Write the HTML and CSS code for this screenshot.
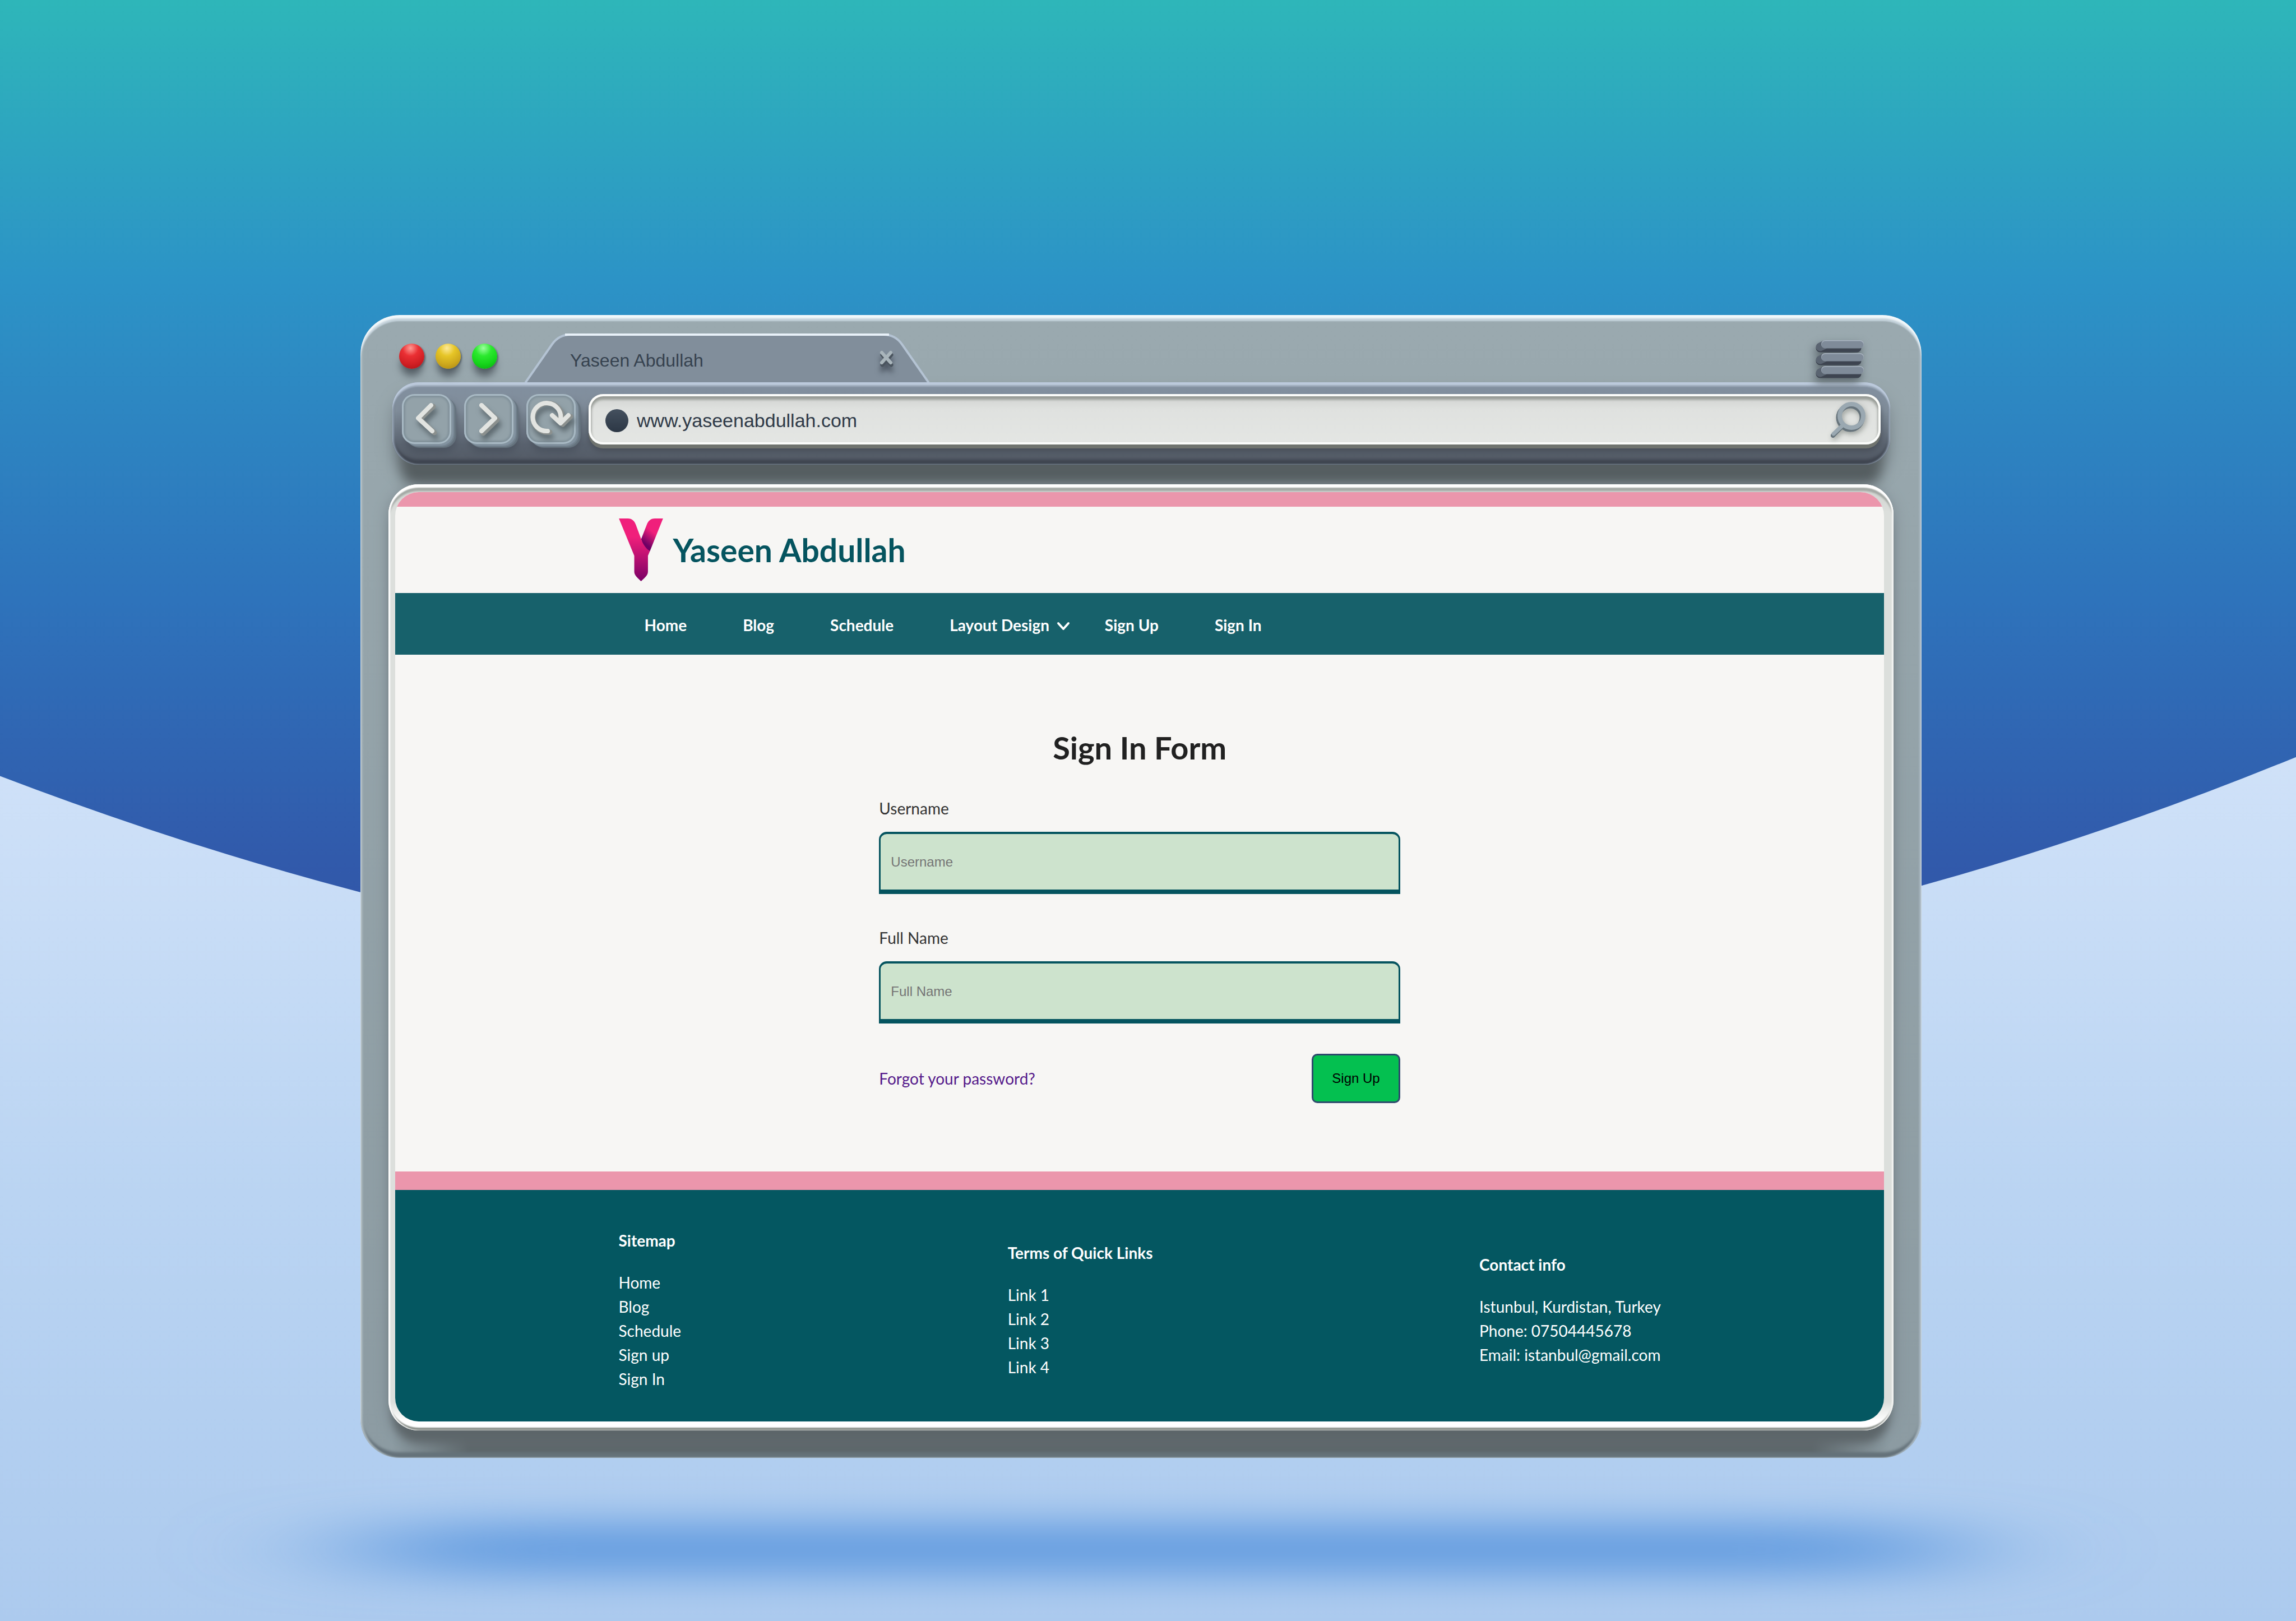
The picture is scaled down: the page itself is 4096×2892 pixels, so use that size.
FILE: index.html
```html
<!DOCTYPE html>
<html lang="en">
<head>
<meta charset="utf-8">
<title>Yaseen Abdullah</title>
<link rel="stylesheet" href="styles.css">
</head>
<body>
<svg class="backdrop" viewBox="0 0 1568 1107" preserveAspectRatio="none" aria-hidden="true">
  <defs>
    <linearGradient id="sea" gradientUnits="userSpaceOnUse" x1="0" y1="0" x2="0" y2="680">
      <stop offset="0" stop-color="#2eb6b9"/>
      <stop offset=".28" stop-color="#2c93c6"/>
      <stop offset=".6" stop-color="#2e73bb"/>
      <stop offset=".86" stop-color="#315aab"/>
      <stop offset="1" stop-color="#3252a4"/>
    </linearGradient>
    <linearGradient id="ice" gradientUnits="userSpaceOnUse" x1="0" y1="520" x2="0" y2="1107">
      <stop offset="0" stop-color="#cfe1f8"/>
      <stop offset=".5" stop-color="#bad4f2"/>
      <stop offset="1" stop-color="#accaee"/>
    </linearGradient>
    <filter id="soft" x="-20%" y="-200%" width="140%" height="500%">
      <feGaussianBlur stdDeviation="60 13"/>
    </filter>
  </defs>
  <rect width="1568" height="1107" fill="url(#ice)"/>
  <path d="M0 0H1568V517Q796 834 0 530Z" fill="url(#sea)"/>
  <rect x="248" y="1040" width="1084" height="36" rx="18" fill="#659de0" filter="url(#soft)"/>
</svg>

<div class="browser">
  <div class="tabs">
    <div class="lights"><span class="light red"></span><span class="light yellow"></span><span class="light green"></span></div>
    <div class="tab">
      <svg class="tab-shape" viewBox="0 0 722 88" preserveAspectRatio="none" aria-hidden="true">
        <path d="M0 88L48 18Q60 2 82 2H640Q662 2 674 18L722 88Z" fill="#818e9b"/>
        <path d="M1 89L49 20Q61 3 82 3H640Q661 3 673 20L721 89" fill="none" stroke="#b4c3d3" stroke-width="4"/>
        <path d="M72 3H650" stroke="#e8f1f9" stroke-width="4"/>
      </svg>
      <span class="tab-title">Yaseen Abdullah</span>
      <button class="tab-close" type="button" aria-label="Close tab">
        <svg viewBox="0 0 28 30"><path d="M6 8L22 26M22 8L6 26" stroke="#4a545e" stroke-width="7" stroke-linecap="round"/><path d="M5 4L21 22M21 4L5 22" stroke="#a9b5bb" stroke-width="6" stroke-linecap="round"/></svg>
      </button>
    </div>
    <button class="menu" type="button" aria-label="Menu">
      <svg viewBox="0 0 90 74">
        <g stroke-linecap="round" stroke-width="15"><path d="M9 15H75M9 38H75M9 61H75" stroke="#3d4450"/><path d="M9 13L17 9M9 36L17 32M9 59L17 55" stroke="#5a6471"/></g>
        <path d="M18 8H80M18 31H80M18 54H80" stroke="#aab5c2" stroke-width="14" stroke-linecap="round"/>
        <path d="M18 9H80M18 32H80M18 55H80" stroke="#7f8b99" stroke-width="13" stroke-linecap="round"/>
      </svg>
    </button>
  </div>

  <div class="toolbar">
    <button class="key" type="button" aria-label="Back"><svg viewBox="0 0 87 89"><path d="M56 22L32 45L58 69" class="glyph-side"/><path d="M52 20L29 43L54 66" class="glyph"/></svg></button>
    <button class="key" type="button" aria-label="Forward"><svg viewBox="0 0 87 89"><path d="M34 23L59 46L34 70" class="glyph-side"/><path d="M31 20L55 43L31 66" class="glyph"/></svg></button>
    <button class="key" type="button" aria-label="Reload"><svg viewBox="0 0 87 89"><path d="M42 68A26 26 0 1 1 64 44M50 41L65 54L79 40" class="glyph-side"/><path d="M38 66A25 25 0 1 1 61 45M46 38L61 52L75 38" class="glyph"/></svg></button>
    <form class="address">
      <span class="site-dot"></span>
      <input class="url" type="text" value="www.yaseenabdullah.com" aria-label="Address">
      <button class="search" type="button" aria-label="Search">
        <svg viewBox="0 0 66 70"><g fill="none" stroke-linecap="round"><g stroke="#66737b"><circle cx="38" cy="30" r="21" stroke-width="9"/><path d="M21 48L7 62" stroke-width="8"/></g><g stroke="#9aa8b1"><circle cx="40" cy="27" r="21" stroke-width="8"/><path d="M23 45L8 59" stroke-width="7"/></g></g></svg>
      </button>
    </form>
  </div>

  <div class="screen">
    <div class="page">
      <header class="site-header">
        <div class="wrap brand">
          <svg class="logo" viewBox="48 47 345 491" role="img" aria-label="Y logo">
            <defs>
              <linearGradient id="stem" gradientUnits="userSpaceOnUse" x1="0" y1="190" x2="0" y2="530"><stop offset="0" stop-color="#f01f7b"/><stop offset="1" stop-color="#7d0066"/></linearGradient>
              <linearGradient id="arm" gradientUnits="userSpaceOnUse" x1="310" y1="150" x2="240" y2="235"><stop offset="0" stop-color="#f01f7b"/><stop offset="1" stop-color="#6d0064"/></linearGradient>
            </defs>
            <path d="M393 47H330C295 47 276 68 266 95L222 208C232 252 258 288 290 304Z" fill="url(#arm)"/>
            <path d="M48 47H118C150 47 168 65 180 95L222 208C236 250 262 286 290 302L275 338V460C275 488 262 499 221 538C181 499 168 488 168 460V338Z" fill="url(#stem)"/>
          </svg>
          <span class="brand-name">Yaseen Abdullah</span>
        </div>
      </header>
      <nav class="site-nav">
        <ul class="wrap nav-list">
          <li><a href="#">Home</a></li>
          <li><a href="#">Blog</a></li>
          <li><a href="#">Schedule</a></li>
          <li class="has-menu"><a href="#">Layout Design <svg class="chevron" viewBox="0 0 24 18" aria-hidden="true"><path d="M3 4L12 14L21 4" fill="none" stroke="#fff" stroke-width="4" stroke-linecap="round" stroke-linejoin="round"/></svg></a></li>
          <li><a href="#">Sign Up</a></li>
          <li><a href="#">Sign In</a></li>
        </ul>
      </nav>
      <main class="content">
        <form class="sign-in">
          <h1>Sign In Form</h1>
          <div class="field"><label for="username">Username</label><input id="username" type="text" placeholder="Username"></div>
          <div class="field"><label for="fullname">Full Name</label><input id="fullname" type="text" placeholder="Full Name"></div>
          <div class="actions"><a href="#">Forgot your password?</a><button type="button">Sign Up</button></div>
        </form>
      </main>
      <footer class="site-footer">
        <div class="wrap columns">
          <section><h2>Sitemap</h2><ul><li><a href="#">Home</a></li><li><a href="#">Blog</a></li><li><a href="#">Schedule</a></li><li><a href="#">Sign up</a></li><li><a href="#">Sign In</a></li></ul></section>
          <section><h2>Terms of Quick Links</h2><ul><li><a href="#">Link 1</a></li><li><a href="#">Link 2</a></li><li><a href="#">Link 3</a></li><li><a href="#">Link 4</a></li></ul></section>
          <section><h2>Contact info</h2><ul><li>Istunbul, Kurdistan, Turkey</li><li>Phone: 07504445678</li><li>Email: istanbul@gmail.com</li></ul></section>
        </div>
      </footer>
    </div>
  </div>
</div>
</body>
</html>
```
FILE: styles.css
```css
* { box-sizing: border-box; }

body {
  margin: 0;
  min-height: 100vh;
  padding: 562px 0 291px;
  font-family: Lato, "Liberation Sans", sans-serif;
  background: #accaee;
}

ul { list-style: none; margin: 0; padding: 0; }
button { font: inherit; border: 0; padding: 0; background: none; }

.backdrop {
  position: absolute;
  z-index: -1;
  inset: 0;
  width: 100%;
  height: 100%;
}

/* Window frame */
.browser {
  width: 68%;
  margin-left: 15.7%;
  padding: 32px 50px 49px;
  border-radius: 70px;
  background:
    linear-gradient(to right, #5f686c00 2%, #5f686c 7%, #5f686c 93%, #5f686c00 98%) bottom / 100% 80px no-repeat,
    linear-gradient(#9aa9af, #95a4aa 25%, #8c9ba2);
  box-shadow: inset 0 6px 3px #f2f8fb, inset 0 11px 2px #c3d1da,
    inset 4px 0 3px #a9b6bb, inset -4px 0 3px #a9b8c2, inset 0 -10px 4px #65727a;
}

.tabs { display: flex; height: 88px; padding: 0 50px 0 19px; }
.lights { display: flex; gap: 20px; width: 224px; padding-top: 19px; }
.light {
  width: 45px;
  height: 45px;
  border-radius: 50%;
  box-shadow: 0 16px 14px -3px #566067, 2px 2px 3px #59646b;
}
.red { background: radial-gradient(circle at 45% 18%, #ff9a94, #ea2f33 32%, #d01f24 65%, #a80f14); }
.yellow { background: radial-gradient(circle at 45% 18%, #fdea9a, #e6c526 32%, #cda81d 65%, #a88312); }
.green { background: radial-gradient(circle at 45% 18%, #9dffa0, #2ce92f 32%, #15d41a 65%, #0aa410); }

.tab {
  position: relative;
  display: flex;
  justify-content: space-between;
  align-items: flex-start;
  width: 722px;
  padding: 30px 62px 0 81px;
}
.tab-shape { position: absolute; inset: 0; width: 100%; height: 100%; }
.tab-title {
  position: relative;
  font: 32px/38px "Liberation Sans", sans-serif;
  color: #36424f;
}
.tab-close { position: relative; width: 28px; height: 34px; }
.tab-close svg { width: 28px; height: 30px; filter: drop-shadow(0 10px 5px #4d5763); }
.menu { width: 90px; height: 74px; margin: 12px 0 0 auto; }
.menu svg { width: 90px; height: 74px; filter: drop-shadow(-3px 8px 8px #5d686e); }

.toolbar {
  display: flex;
  gap: 23px;
  margin: 0 6px 0 7px;
  padding: 21px 17px 36px;
  border-radius: 46px;
  background: linear-gradient(#8290a0, #7f8c99 35%, #5a636f 76%, #525964);
  box-shadow: inset 0 5px 2px #bccadc, inset 0 8px 2px #9caaba,
    inset 3px 0 3px #8c9aaa, inset -3px 0 3px #8c9aaa, inset 0 -9px 5px #3f4550,
    0 54px 22px -16px #565e61, 0 20px 30px -4px #6f7a7f;
}
.key {
  flex: none;
  width: 88px;
  height: 89px;
  border-radius: 22px;
  background: #93a2a9;
  box-shadow: inset 0 0 0 3px #a8b9c4, inset 0 0 3px 6px #82929b,
    2px 1px 0 #8595a0, 4px 3px 0 #8292a0, 6px 5px 0 #73828e, 9px 7px 1px #66747f,
    8px 16px 14px #4c5460;
}
.key svg { display: block; width: 87px; height: 89px; filter: drop-shadow(3px 8px 5px #5b676d); }
.glyph, .glyph-side { fill: none; stroke-linecap: round; stroke-linejoin: round; }
.glyph { stroke: #e2e4e1; stroke-width: 8px; }
.glyph-side { stroke: #8b908e; stroke-width: 9px; }

.address {
  flex: 1;
  display: flex;
  align-items: center;
  height: 90px;
  padding: 4px 26px 0 30px;
  border-radius: 26px;
  background: linear-gradient(#cfd2cf, #dfe1df 30%, #e4e6e3);
  box-shadow: inset 0 0 0 4px #fbfcfa, inset 0 5px 4px 5px #979b96, 0 7px 0 #70746f,
    0 12px 12px #484e58;
}
.site-dot {
  width: 41px;
  height: 41px;
  border-radius: 50%;
  background: linear-gradient(#44505e, #2c3745);
}
.url {
  flex: 1;
  margin-left: 15px;
  padding: 0;
  border: 0;
  background: none;
  font: 34px/44px "Liberation Sans", sans-serif;
  color: #2f3a48;
}
.search { width: 66px; height: 70px; }
.search svg { width: 66px; height: 70px; filter: drop-shadow(2px 4px 5px #9a9f9b); }

/* Page area inside the window */
.screen {
  margin-top: 35px;
  padding: 14px 17px 16px 12px;
  border-radius: 54px;
  background: linear-gradient(#cfd3cf, #dcdfdc 3%, #dcdfdc 97%, #fff 99%);
  box-shadow: inset 0 6px 2px #fff, inset 3px 0 2px #fff, inset -3px 0 2px #f4f5f3,
    inset 0 -5px 2px #8c918c, inset 0 12px 3px #a3a8a4,
    0 30px 16px -8px #5d666a, 0 6px 24px #7a868d;
}
.page { overflow: hidden; border-radius: 42px; background: #f7f6f4; }
.wrap { width: 70%; margin: 0 auto; }

.site-header { border-top: 26px solid #eb96ac; }
.brand { display: flex; align-items: center; gap: 18px; height: 154px; }
.logo { width: 79px; height: 112px; }
.brand-name { font-size: 57px; line-height: 72px; font-weight: 700; color: #05545f; }

.site-nav { background: #17616b; }
.nav-list { display: flex; gap: 64px; height: 110px; align-items: center; padding: 4px 0 0 28px; }
.nav-list li { padding: 0 18px; }
.nav-list .has-menu { padding-right: 0; margin-right: -20px; }
.nav-list a { font-size: 28px; line-height: 40px; font-weight: 700; color: #fff; text-decoration: none; }
.chevron { width: 24px; height: 18px; margin-left: 6px; }

.content { padding: 126px 0 122px; }
.sign-in { width: 35%; margin: 0 auto; }
.sign-in h1 {
  margin: 0 0 48px;
  text-align: center;
  font-size: 56px;
  line-height: 80px;
  font-weight: 700;
  color: #212121;
}
.field { margin-bottom: 58px; }
.field label { display: block; font-size: 28px; line-height: 40px; color: #333; }
.field input {
  display: block;
  width: 100%;
  height: 111px;
  margin-top: 22px;
  padding: 0 18px;
  border: 3px solid #05545f;
  border-top-width: 4px;
  border-bottom-width: 8px;
  border-radius: 14px 14px 0 0;
  background: #cde3cd;
  font: 24px/40px "Liberation Sans", sans-serif;
}
.field input::placeholder { color: #757575; opacity: 1; }
.actions { display: flex; justify-content: space-between; align-items: center; margin-top: -4px; }
.actions a { font-size: 28px; line-height: 40px; color: #551a8b; text-decoration: none; }
.actions button {
  width: 158px;
  height: 88px;
  border: 3px solid #2f4a6d;
  border-radius: 10px;
  background: #04c050;
  font: 24px/40px "Liberation Sans", sans-serif;
  color: #000;
}

.site-footer {
  border-top: 33px solid #eb96ac;
  padding: 69px 0 54px;
  background: #045761;
  color: #fff;
}
.columns { display: flex; justify-content: space-between; align-items: center; }
.columns h2 { margin: 0 0 32px; font-size: 28px; line-height: 43px; font-weight: 700; }
.columns li { font-size: 28px; line-height: 43px; }
.columns a { color: inherit; text-decoration: none; }
```
